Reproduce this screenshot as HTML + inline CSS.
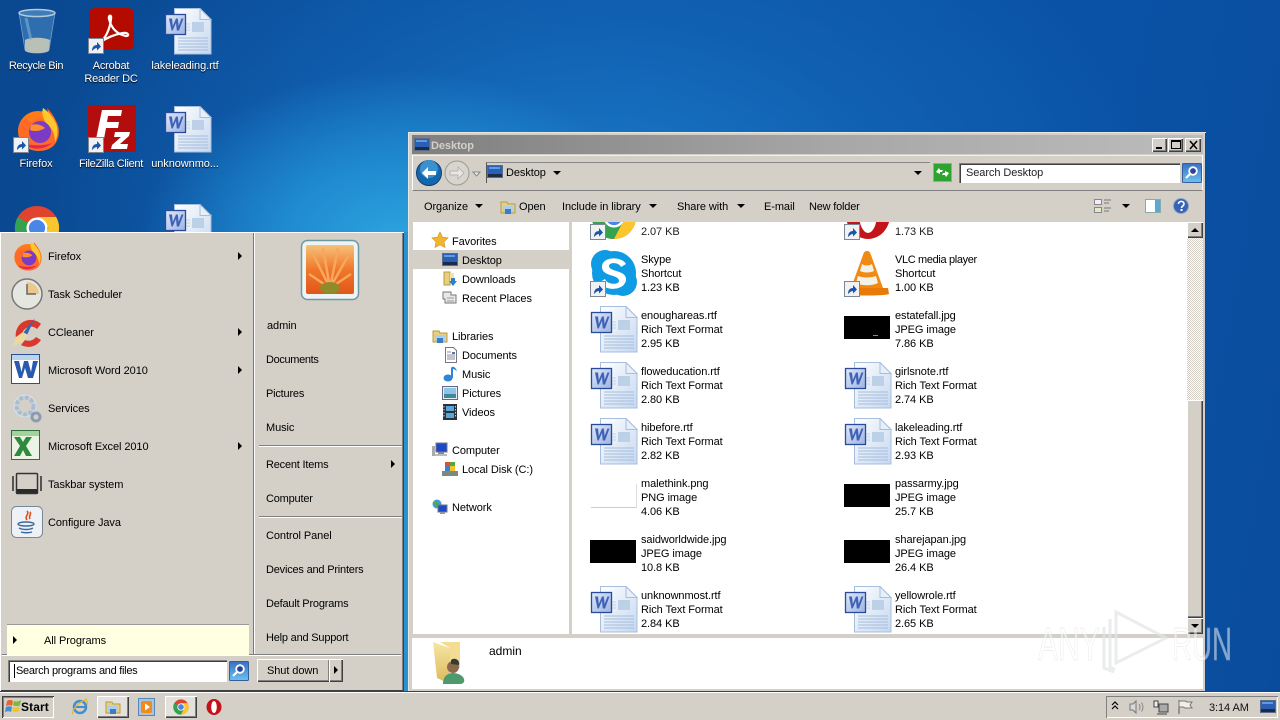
<!DOCTYPE html>
<html><head><meta charset="utf-8"><title>Desktop</title>
<style>
html,body{margin:0;padding:0;width:1280px;height:720px;overflow:hidden}
body{position:relative;font:11px/14px "Liberation Sans",sans-serif;color:#000;background:#0b55a8;letter-spacing:-.08px}
#bg{position:absolute;inset:0;background:
radial-gradient(ellipse 260px 170px at 400px 240px,#2ca4de 0,#1f8ad0 45%,rgba(25,120,200,0) 100%),
radial-gradient(ellipse 560px 330px at 600px 200px,#1b78c6 0,rgba(20,105,185,.55) 55%,rgba(15,90,170,0) 100%),
linear-gradient(100deg,#0a4890 0,#0c56aa 45%,#0a52a6 80%,#0a4c9c 100%)}
.t,.w{position:absolute;white-space:nowrap}
.t{margin-top:1px}
.w{color:#fff;text-align:center;line-height:13px;text-shadow:0 1px 1px #000;width:76px;margin-top:1px}
svg.i,svg.a{position:absolute;overflow:visible}
.abs{position:absolute;box-sizing:border-box}
.raised{background:#d4d0c8;box-shadow:inset 1px 1px 0 #fff,inset -1px -1px 0 #404040,inset -2px -2px 0 #808080}
.sunk{background:#fff;box-shadow:inset 1px 1px 0 #808080,inset 2px 2px 0 #404040,inset -1px -1px 0 #fff}
.ar{position:absolute;width:0;height:0;border-left:4px solid transparent;border-right:4px solid transparent;border-top:4px solid #000}
.rr{position:absolute;width:0;height:0;border-top:4px solid transparent;border-bottom:4px solid transparent;border-left:4px solid #000}
</style></head><body>
<svg width="0" height="0" style="position:absolute">
<defs>
<linearGradient id="pg" x1="0" y1="0" x2="1" y2="1"><stop offset="0" stop-color="#fff"/><stop offset="1" stop-color="#c5d8f0"/></linearGradient>
<linearGradient id="wb" x1="0" y1="0" x2="1" y2="1"><stop offset="0" stop-color="#dfe7f7"/><stop offset="1" stop-color="#9db4e2"/></linearGradient>
<linearGradient id="fld" x1="0" y1="0" x2="0" y2="1"><stop offset="0" stop-color="#f6e6a4"/><stop offset="1" stop-color="#dcb95c"/></linearGradient>
<linearGradient id="sb" x1="0" y1="0" x2="0" y2="1"><stop offset="0" stop-color="#3a6fc4"/><stop offset="1" stop-color="#6dc0ef"/></linearGradient>
<symbol id="doc" viewBox="0 0 48 48">
<path d="M10.500 .5H36L47 11.500V46H10.500Z" fill="url(#pg)" stroke="#a8bedd"/>
<path d="M36 .5V11.500H47Z" fill="#e8eff9" stroke="#a8bedd"/>
<path d="M14 30H44M14 33H44M14 36H44M14 39H44M14 42H44" stroke="#a6bcdc"/>
<rect x="28" y="14" width="12" height="10" fill="#bcd0e8"/>
<path d="M22 16h4M22 19h4M22 22h4" stroke="#c4d4ea"/>
<rect x="1.500" y="6.500" width="20" height="20" fill="url(#wb)" stroke="#2a4a9c" stroke-width="1.300"/>
<path d="M5 10.500h3l.8 7.500 3.200-7.500h1.800l.8 7.500 2.900-7.500h2l-4.500 12h-2.200l-.8-7.500-3.300 7.500H7.500z" fill="#3f62b8"/>
</symbol>
<symbol id="sc" viewBox="0 0 16 16">
<rect x=".5" y=".5" width="15" height="15" fill="#f0f1f3" stroke="#7d8794"/>
<path d="M4 13c0-4 2-6 5-6V4l4 4.500-4 4V10c-2 0-3 1-5 3z" fill="#1b54a8"/>
</symbol>
<symbol id="ff" viewBox="0 0 48 48">
<circle cx="25" cy="26" r="20" fill="#ff7a1a"/>
<path d="M7 17c-3 9-1 19 7 25 9 6 22 5 28-3 5-7 5-16 1-23-2-5-6-10-9-13 2 6 1 9-2 11-6-2-11 0-13 3-4-1-5-2-6-5-1 2-3 4-6 5z" fill="#ff6a26"/>
<path d="M30 3c6 4 12 11 14 19 1 6 0 11-2 15 0-8-3-14-8-18-3-3-6-10-4-16z" fill="#ffc72e"/>
<circle cx="27" cy="27" r="11" fill="#7a3bc6"/>
<path d="M17 25c4 2 11 1 15-2-3-3-9-5-14-3z" fill="#ff8f2a"/>
<path d="M10 38c7 7 20 8 29 0-7 3-21 3-29 0z" fill="#e3245e"/>
</symbol>
<symbol id="ch" viewBox="0 0 48 48">
<circle cx="24" cy="24" r="23" fill="#e0432e"/>
<path d="M24 24L4 35.500A23 23 0 0 1 4 12.500Z" fill="#35a24f"/>
<path d="M4 35.500A23 23 0 0 0 24 47L36 24H24Z" fill="#35a24f"/>
<path d="M24 47A23 23 0 0 0 44 12.500H24L36 24Z" fill="#fbc62c"/>
<circle cx="24" cy="24" r="11" fill="#fff"/><circle cx="24" cy="24" r="8.500" fill="#4a86e8"/>
</symbol>
<symbol id="mon" viewBox="0 0 16 16">
<rect x=".5" y="1.500" width="15" height="12" fill="#2b5fb5" stroke="#5a6c88"/>
<rect x="1" y="10" width="14" height="3" fill="#1b2b4a"/><path d="M2 3h11v2H2z" fill="#5f9be0"/>
</symbol>
<symbol id="fold" viewBox="0 0 16 16">
<path d="M1 3h6l1 2h7v9H1z" fill="#e8cf7c" stroke="#b79a46"/><path d="M3 7h10v6H3z" fill="#a8d0ee"/><path d="M5 15v-5h6v5" fill="#3c7cc4"/>
</symbol>
<symbol id="search" viewBox="0 0 20 20">
<rect x=".5" y=".5" width="19" height="19" rx="1" fill="url(#sb)" stroke="#355e9f"/>
<circle cx="11" cy="8" r="3.800" fill="#26449a" stroke="#fff" stroke-width="1.800"/>
<path d="M8 11l-4 4" stroke="#fff" stroke-width="2.200"/>
</symbol>
</defs></svg>
<div id="bg"></div>

<!-- desktop icons -->
<svg class="i" style="left:18px;top:8px" width="38" height="46" viewBox="0 0 38 46">
<path d="M1 5L7 42c1 4 23 4 24 0L37 5z" fill="#2f6eae" stroke="#7fa8cc" stroke-width=".7"/>
<path d="M7 32c5-3 19-3 25 0l-1 10c-2 4-22 4-24 0z" fill="#b9c0b8"/>
<ellipse cx="19" cy="5" rx="18" ry="3.500" fill="#3f7db8" stroke="#b4cbdd" stroke-width="1.500"/>
<path d="M8 10l5 22" stroke="#7fb4dc" stroke-width="3" opacity=".55"/></svg>
<div class="w" style="left:-2px;top:59px;letter-spacing:-.35px">Recycle Bin</div>

<svg class="i" style="left:89px;top:8px" width="46" height="44" viewBox="0 0 46 44">
<rect width="45" height="42" rx="6" fill="#b30b00"/>
<path d="M10 35c6-3 11-14 12-24 1-5-3-4-2 0 2 8 7 15 17 17 4 0 2-4-3-3-7 1-15 4-24 10z" fill="none" stroke="#fff" stroke-width="2.200"/></svg>
<svg class="a" style="left:88px;top:38px" width="16" height="16"><use href="#sc"/></svg>
<div class="w" style="left:73px;top:59px;letter-spacing:-.2px">Acrobat<br>Reader DC</div>

<svg class="i" style="left:164px;top:8px" width="48" height="48"><use href="#doc"/></svg>
<div class="w" style="left:147px;top:59px">lakeleading.rtf</div>

<svg class="i" style="left:13px;top:105px" width="48" height="48"><use href="#ff"/></svg>
<svg class="a" style="left:13px;top:137px" width="16" height="16"><use href="#sc"/></svg>
<div class="w" style="left:-2px;top:157px">Firefox</div>

<svg class="i" style="left:88px;top:105px" width="48" height="48" viewBox="0 0 48 48">
<rect width="48" height="47" fill="#b30d0d"/>
<path d="M14 5h20l-1 6H20l-1 6h12l-1 6H18l-3 16H7zM27 27h15l-1 4-9 8h8l-1 5H23l1-4 9-8h-7z" fill="#fff"/></svg>
<svg class="a" style="left:88px;top:137px" width="16" height="16"><use href="#sc"/></svg>
<div class="w" style="left:73px;top:157px;letter-spacing:-.32px">FileZilla Client</div>

<svg class="i" style="left:164px;top:106px" width="48" height="48"><use href="#doc"/></svg>
<div class="w" style="left:147px;top:157px">unknownmo...</div>

<svg class="i" style="left:14px;top:205px" width="46" height="46"><use href="#ch"/></svg>
<svg class="i" style="left:164px;top:204px" width="48" height="48"><use href="#doc"/></svg>

<!-- explorer window -->
<div class="abs" style="left:404px;top:232px;width:4px;height:459px;background:#2a92cf"></div>
<div class="abs" style="left:408px;top:132px;width:798px;height:560px;background:#d4d0c8;box-shadow:inset 1px 1px 0 #e8e6e0,inset -1px -1px 0 #404040,inset -2px -2px 0 #d4d0c8"></div>
<div class="abs" style="left:412px;top:135px;width:791px;height:19px;background:linear-gradient(90deg,#7f7f7f,#a8a8a8 55%,#bcbcbc)"></div>
<svg class="i" style="left:414px;top:137px" width="16" height="16"><use href="#mon"/></svg>
<div class="t" style="left:431px;top:138px;font-weight:bold;color:#d4d0c8">Desktop</div>
<div class="abs raised" style="left:1152px;top:138px;width:15px;height:14px"></div>
<div class="abs" style="left:1156px;top:147px;width:6px;height:2px;background:#000"></div>
<div class="abs raised" style="left:1168px;top:138px;width:15px;height:14px"></div>
<div class="abs" style="left:1171px;top:140px;width:10px;height:9px;border:1px solid #000;border-top-width:2px"></div>
<div class="abs raised" style="left:1185px;top:138px;width:16px;height:14px"></div>
<svg class="i" style="left:1189px;top:141px" width="9" height="8"><path d="M1 0l7 8M8 0L1 8" stroke="#000" stroke-width="1.500"/></svg>

<!-- nav bar -->
<div class="abs" style="left:412px;top:155px;width:791px;height:36px;border:1px solid #fff;border-top-color:#efeee9;border-bottom-color:#808080;background:#d4d0c8"></div>
<svg class="i" style="left:416px;top:160px" width="70" height="28" viewBox="0 0 70 28">
<circle cx="13" cy="13" r="12.500" fill="#1567ac" stroke="#0c3f72"/><circle cx="13" cy="9" r="9" fill="#3b90cf"/>
<path d="M6 13l6-6v4h8v4h-8v4z" fill="#fff"/>
<circle cx="41" cy="13" r="12" fill="#d8d5cf" stroke="#9a9a95"/>
<path d="M48 13l-6-6v4h-8v4h8v4z" fill="#e8e6e2" stroke="#a8a8a4" stroke-width=".7"/>
<path d="M57 12h7l-3.500 4z" fill="#eee" stroke="#888"/></svg>
<div class="abs" style="left:486px;top:162px;width:444px;height:21px;border-left:1px solid #555;border-top:1px solid #888"></div>
<svg class="i" style="left:487px;top:164px" width="16" height="16"><use href="#mon"/></svg>
<div class="t" style="left:506px;top:165px">Desktop</div>
<div class="ar" style="left:553px;top:171px"></div>
<div class="ar" style="left:914px;top:171px"></div>
<svg class="i" style="left:933px;top:163px" width="19" height="19" viewBox="0 0 19 19">
<rect x=".5" y=".5" width="18" height="18" fill="#2fa32f" stroke="#7cbc7c"/>
<path d="M3 9l3-4 1 2 3 0-1 2H7l0 2zM16 10l-3 4-1-2-3 0 1-2h2l0-2z" fill="#fff"/></svg>
<div class="abs sunk" style="left:959px;top:163px;width:221px;height:20px"></div>
<div class="t" style="left:966px;top:165px;color:#222">Search Desktop</div>
<svg class="i" style="left:1182px;top:163px" width="20" height="20"><use href="#search"/></svg>

<!-- toolbar -->
<div class="t" style="left:424px;top:199px">Organize</div><div class="ar" style="left:475px;top:204px"></div>
<svg class="i" style="left:500px;top:199px" width="16" height="16"><use href="#fold"/></svg>
<div class="t" style="left:519px;top:199px">Open</div>
<div class="t" style="left:562px;top:199px">Include in library</div><div class="ar" style="left:649px;top:204px"></div>
<div class="t" style="left:677px;top:199px">Share with</div><div class="ar" style="left:737px;top:204px"></div>
<div class="t" style="left:764px;top:199px">E-mail</div>
<div class="t" style="left:809px;top:199px;letter-spacing:-.2px">New folder</div>
<svg class="i" style="left:1094px;top:198px" width="18" height="16" viewBox="0 0 18 16">
<rect x=".5" y="1.500" width="7" height="5" fill="#eef" stroke="#888"/><rect x=".5" y="9.500" width="7" height="5" fill="#dfe8c8" stroke="#888"/>
<path d="M10 2h7M10 5h5M10 10h7M10 13h5" stroke="#777"/></svg>
<div class="ar" style="left:1122px;top:204px"></div>
<svg class="i" style="left:1145px;top:199px" width="16" height="14" viewBox="0 0 16 14">
<rect x=".5" y=".5" width="15" height="13" fill="#fff" stroke="#8aa"/><rect x="10" y="1" width="5" height="12" fill="#5aa9d0"/></svg>
<svg class="i" style="left:1173px;top:198px" width="16" height="16" viewBox="0 0 16 16">
<circle cx="8" cy="8" r="7.500" fill="#3a63b4" stroke="#8fa3cc"/>
<path d="M5.500 6c0-3.500 5.500-3.500 5.500 0 0 2-2.500 2-2.500 4" fill="none" stroke="#fff" stroke-width="1.600"/><rect x="7.500" y="11" width="2" height="2" fill="#fff"/></svg>

<!-- panes -->
<div class="abs" style="left:413px;top:222px;width:156px;height:412px;background:#fff"></div>
<div class="abs" style="left:572px;top:222px;width:615px;height:412px;background:#fff;overflow:hidden" id="list">
<svg class="i" style="left:19px;top:-28px" width="46" height="46"><use href="#ch"/></svg>
<svg class="i" style="left:273px;top:-30px" width="46" height="46" viewBox="0 0 46 46"><ellipse cx="23" cy="23" rx="22" ry="24" fill="#c3141c"/><ellipse cx="23" cy="22" rx="9" ry="19" fill="#fff"/></svg>
<svg class="i" style="left:19px;top:28px" width="46" height="46" viewBox="0 0 46 46">
<circle cx="14" cy="14" r="14" fill="#0f9be4"/><circle cx="32" cy="32" r="14" fill="#0f9be4"/><circle cx="23" cy="23" r="22" fill="#0f9be4"/>
<path d="M35 29c0-9-17-7-17-13 0-4 10-4 12 1l5-3c-4-8-24-8-24 3 0 10 17 7 17 14 0 4-12 4-14-2l-5 3c4 10 26 9 26-3z" fill="#fff"/></svg>
<svg class="i" style="left:272px;top:28px" width="46" height="46" viewBox="0 0 46 46">
<path d="M23 1c-2 0-3 1-4 4L7 38h32L27 5c-1-3-2-4-4-4z" fill="#f08a12"/>
<path d="M18 14c3 2 7 2 10 0l2 7c-4 2-10 2-14 0zM14 26c5 2 13 2 18 0l2 7c-6 3-16 3-22 0z" fill="#f4f1ea"/>
<path d="M2 38h42l1 6c-3 2-41 2-44 0z" fill="#e87a08"/></svg>
</div>
<svg class="a" style="left:590px;top:224px" width="16" height="16"><use href="#sc"/></svg>
<svg class="a" style="left:844px;top:224px" width="16" height="16"><use href="#sc"/></svg>
<svg class="a" style="left:590px;top:281px" width="16" height="16"><use href="#sc"/></svg>
<svg class="a" style="left:844px;top:281px" width="16" height="16"><use href="#sc"/></svg>

<div class="t" style="left:641px;top:224px;color:#222">2.07 KB</div>
<div class="t" style="left:895px;top:224px;color:#222">1.73 KB</div>
<div class="t" style="left:641px;top:252px">Skype<br>Shortcut<br>1.23 KB</div>
<div class="t" style="left:895px;top:252px"><span style="letter-spacing:-.35px">VLC media player</span><br>Shortcut<br>1.00 KB</div>
<div class="t" style="left:641px;top:308px">enoughareas.rtf<br>Rich Text Format<br>2.95 KB</div>
<div class="t" style="left:895px;top:308px">estatefall.jpg<br>JPEG image<br>7.86 KB</div>
<div class="t" style="left:641px;top:364px">floweducation.rtf<br>Rich Text Format<br>2.80 KB</div>
<div class="t" style="left:895px;top:364px">girlsnote.rtf<br>Rich Text Format<br>2.74 KB</div>
<div class="t" style="left:641px;top:420px">hibefore.rtf<br>Rich Text Format<br>2.82 KB</div>
<div class="t" style="left:895px;top:420px">lakeleading.rtf<br>Rich Text Format<br>2.93 KB</div>
<div class="t" style="left:641px;top:476px">malethink.png<br>PNG image<br>4.06 KB</div>
<div class="t" style="left:895px;top:476px">passarmy.jpg<br>JPEG image<br>25.7 KB</div>
<div class="t" style="left:641px;top:532px">saidworldwide.jpg<br>JPEG image<br>10.8 KB</div>
<div class="t" style="left:895px;top:532px">sharejapan.jpg<br>JPEG image<br>26.4 KB</div>
<div class="t" style="left:641px;top:588px">unknownmost.rtf<br>Rich Text Format<br>2.84 KB</div>
<div class="t" style="left:895px;top:588px">yellowrole.rtf<br>Rich Text Format<br>2.65 KB</div>

<svg class="i" style="left:590px;top:306px" width="48" height="48"><use href="#doc"/></svg>
<svg class="i" style="left:590px;top:362px" width="48" height="48"><use href="#doc"/></svg>
<svg class="i" style="left:590px;top:418px" width="48" height="48"><use href="#doc"/></svg>
<svg class="i" style="left:844px;top:362px" width="48" height="48"><use href="#doc"/></svg>
<svg class="i" style="left:844px;top:418px" width="48" height="48"><use href="#doc"/></svg>
<svg class="i" style="left:590px;top:586px" width="48" height="48"><use href="#doc"/></svg>
<svg class="i" style="left:844px;top:586px" width="48" height="48"><use href="#doc"/></svg>
<div class="abs" style="left:844px;top:316px;width:46px;height:23px;background:#000"></div>
<div class="abs" style="left:873px;top:335px;width:5px;height:1px;background:#888"></div>
<div class="abs" style="left:844px;top:484px;width:46px;height:23px;background:#000"></div>
<div class="abs" style="left:590px;top:540px;width:46px;height:23px;background:#000"></div>
<div class="abs" style="left:844px;top:540px;width:46px;height:23px;background:#000"></div>
<div class="abs" style="left:591px;top:484px;width:46px;height:24px;border-right:1px solid #ddd;border-bottom:1px solid #ccc"></div>

<!-- scrollbar -->
<div class="abs" style="left:1187px;top:222px;width:16px;height:412px;background:repeating-conic-gradient(#d4d0c8 0 25%,#fff 0 50%) 0 0/2px 2px"></div>
<div class="abs raised" style="left:1187px;top:222px;width:16px;height:16px"></div>
<div class="abs" style="left:1191px;top:228px;border-left:4px solid transparent;border-right:4px solid transparent;border-bottom:4px solid #000"></div>
<div class="abs raised" style="left:1187px;top:400px;width:16px;height:218px"></div>
<div class="abs raised" style="left:1187px;top:618px;width:16px;height:16px"></div>
<div class="ar" style="left:1191px;top:624px"></div>

<!-- tree -->
<div class="abs" style="left:413px;top:250px;width:156px;height:19px;background:#d4d0c8"></div>
<svg class="i" style="left:432px;top:232px" width="16" height="16" viewBox="0 0 16 16"><path d="M8 0l2.500 5.200 5.500.7-4 3.900 1 5.700L8 12.800 3 15.500l1-5.700-4-3.900 5.500-.7z" fill="#f3b52d" stroke="#d48a20" stroke-width=".6"/></svg>
<div class="t" style="left:452px;top:234px">Favorites</div>
<svg class="i" style="left:442px;top:252px" width="16" height="16"><use href="#mon"/></svg>
<div class="t" style="left:462px;top:253px">Desktop</div>
<svg class="i" style="left:442px;top:271px" width="16" height="16" viewBox="0 0 16 16"><path d="M2 1h6v13H2z" fill="#e8cf7c" stroke="#b79a46"/><path d="M8 2h4v8H8z" fill="#f2e3a8"/><path d="M9 7h4v3h2l-4 5-4-5h2z" fill="#2f7fd0"/></svg>
<div class="t" style="left:462px;top:272px">Downloads</div>
<svg class="i" style="left:442px;top:290px" width="16" height="16" viewBox="0 0 16 16"><path d="M1 2h8v3h5v8H3V9H1z" fill="#e8e8e8" stroke="#777"/><path d="M5 8h7M5 11h7" stroke="#999"/></svg>
<div class="t" style="left:462px;top:291px">Recent Places</div>
<svg class="i" style="left:432px;top:328px" width="16" height="16"><use href="#fold"/></svg>
<div class="t" style="left:452px;top:329px">Libraries</div>
<svg class="i" style="left:444px;top:347px" width="14" height="16" viewBox="0 0 14 16"><path d="M1.500.5h8l3 3v12h-11z" fill="#fff" stroke="#778"/><path d="M3 5h4M3 8h8M3 10h8M3 12h8" stroke="#889"/><rect x="8" y="5" width="3" height="2" fill="#57a"/></svg>
<div class="t" style="left:462px;top:348px">Documents</div>
<svg class="i" style="left:443px;top:365px" width="15" height="17" viewBox="0 0 15 17"><ellipse cx="5" cy="13" rx="4.500" ry="3.500" fill="#2f86d8"/><path d="M8 13V3c2-3 5 0 6 3-2-1-3-2-4-2v9z" fill="#2f86d8"/></svg>
<div class="t" style="left:462px;top:367px">Music</div>
<svg class="i" style="left:442px;top:386px" width="16" height="14" viewBox="0 0 16 14"><rect x=".5" y=".5" width="15" height="13" fill="#e8eef2" stroke="#668"/><path d="M2 2h12v6H2z" fill="#8fc4e6"/><path d="M2 8h12v4H2z" fill="#3f8a9a"/></svg>
<div class="t" style="left:462px;top:386px">Pictures</div>
<svg class="i" style="left:443px;top:404px" width="14" height="16" viewBox="0 0 14 16"><rect width="14" height="16" fill="#2b3138"/><rect x="3" y="2" width="8" height="5" fill="#57a7dc"/><rect x="3" y="9" width="8" height="5" fill="#57a7dc"/><path d="M1 2v12" stroke="#ccc" stroke-dasharray="1.500 1.500"/><path d="M12.500 2v12" stroke="#ccc" stroke-dasharray="1.500 1.500"/></svg>
<div class="t" style="left:462px;top:405px">Videos</div>
<svg class="i" style="left:432px;top:442px" width="16" height="16" viewBox="0 0 16 16"><rect x="0" y="4" width="3" height="10" fill="#aaa"/><rect x="4" y="1" width="11" height="9" fill="#1b49c8" stroke="#778"/><rect x="6" y="10" width="6" height="2" fill="#889"/><rect x="3" y="12" width="12" height="2" fill="#bbb"/></svg>
<div class="t" style="left:452px;top:443px">Computer</div>
<svg class="i" style="left:442px;top:461px" width="16" height="16" viewBox="0 0 16 16"><rect x="0" y="10" width="16" height="5" fill="#7a8a80"/><rect x="3" y="1" width="5" height="4" fill="#e84c2a"/><rect x="8" y="1" width="5" height="4" fill="#52a83a"/><rect x="3" y="5" width="5" height="5" fill="#3f7fd0"/><rect x="8" y="5" width="5" height="5" fill="#f3c32a"/></svg>
<div class="t" style="left:462px;top:462px">Local Disk (C:)</div>
<svg class="i" style="left:432px;top:499px" width="16" height="16" viewBox="0 0 16 16"><circle cx="5" cy="5" r="4.500" fill="#3c9fd8"/><path d="M2 3h4l1 3-3 2z" fill="#57a83c"/><rect x="6" y="6" width="9" height="7" fill="#1b49c8" stroke="#778"/><rect x="8" y="13" width="5" height="2" fill="#999"/></svg>
<div class="t" style="left:452px;top:500px">Network</div>

<!-- details pane -->
<div class="abs" style="left:412px;top:638px;width:791px;height:51px;background:#fff"></div>
<svg class="i" style="left:432px;top:640px" width="40" height="46" viewBox="0 0 40 46">
<path d="M1 2l17 6v36L5 38z" fill="url(#fld)"/><path d="M8 2h20v26H18V8z" fill="#f3dc94"/>
<circle cx="21" cy="27" r="6" fill="#8a6a4a"/><path d="M19 20c4-3 9 0 8 5l-8-1z" fill="#3a3a30"/>
<path d="M11 44c0-9 6-11 10-11s10 2 11 6c1 3-1 5-4 5z" fill="#4f9a6c"/></svg>
<div class="t" style="left:489px;top:644px;font-size:12px;margin-top:0;letter-spacing:0">admin</div>

<!-- watermark -->
<svg class="i" style="left:1030px;top:605px" width="210" height="70" viewBox="0 0 210 70">
<g opacity=".5" fill="#fff" stroke="#d4d7da" stroke-width=".7" style="letter-spacing:0">
<text x="8" y="55" font-family="Liberation Sans" font-size="46" textLength="62" lengthAdjust="spacingAndGlyphs">ANY</text>
<text x="142" y="55" font-family="Liberation Sans" font-size="46" textLength="60" lengthAdjust="spacingAndGlyphs">RUN</text>
</g>
<g fill="none" stroke="#e2e4e6" stroke-width="3" opacity=".7"><path d="M86 7V58L136 33Z"/><path d="M80 14V62l5 3"/><path d="M74 22V63l10 4"/></g>
</svg>

<!-- start menu -->
<div class="abs" style="left:0;top:232px;width:404px;height:459px;background:#d4d0c8;box-shadow:inset 1px 1px 0 #fff,inset -1px -1px 0 #404040,inset -2px 0 0 #808080"></div>
<div class="abs" style="left:253px;top:233px;width:2px;height:421px;background:linear-gradient(90deg,#777 50%,#fff 50%)"></div>
<div class="abs" style="left:2px;top:654px;width:399px;height:2px;background:linear-gradient(#808080 50%,#fff 50%)"></div>

<svg class="i" style="left:11px;top:240px" width="32" height="32"><use href="#ff"/></svg>
<div class="t" style="left:48px;top:249px">Firefox</div><div class="rr" style="left:238px;top:252px"></div>
<svg class="i" style="left:11px;top:278px" width="32" height="32" viewBox="0 0 32 32"><circle cx="16" cy="16" r="15" fill="#e6e6e0" stroke="#777" stroke-width="1.500"/><path d="M16 4a12 12 0 0 1 12 12H16z" fill="#ecc88a"/><path d="M16 6v10h9" fill="none" stroke="#666" stroke-width="1.500"/></svg>
<div class="t" style="left:48px;top:287px">Task Scheduler</div>
<svg class="i" style="left:11px;top:316px" width="32" height="32" viewBox="0 0 32 32"><path d="M30 8A15 15 0 0 0 5 22l6-3A9 9 0 0 1 26 13z" fill="#d8392c"/><path d="M30 24a15 15 0 0 1-20 5l4-5a9 9 0 0 0 11-3z" fill="#d8392c"/><path d="M24 2l-8 17-4-2z" fill="#3468b0"/><path d="M12 16l5 3-4 6-11 5 3-9z" fill="#ecd9a0"/></svg>
<div class="t" style="left:48px;top:325px">CCleaner</div><div class="rr" style="left:238px;top:328px"></div>
<svg class="i" style="left:11px;top:354px" width="30" height="30" viewBox="0 0 30 30"><rect x=".5" y=".5" width="28" height="29" fill="#fff" stroke="#2a4f92"/><rect x="1" y="1" width="27" height="5" fill="#bcd3ee"/><path d="M3 7h5l2.500 11L13 7h4l3 11L22 7h5l-5 17h-5l-3-10-3 10H8z" fill="#2a5ab0"/></svg>
<div class="t" style="left:48px;top:363px">Microsoft Word 2010</div><div class="rr" style="left:238px;top:366px"></div>
<svg class="i" style="left:11px;top:392px" width="32" height="32" viewBox="0 0 32 32"><circle cx="14" cy="14" r="9" fill="none" stroke="#a6bdd8" stroke-width="5" stroke-dasharray="4 2"/><circle cx="14" cy="14" r="11" fill="none" stroke="#d8e2ee" stroke-width="1"/><circle cx="25" cy="25" r="4" fill="none" stroke="#8a9cb0" stroke-width="3"/></svg>
<div class="t" style="left:48px;top:401px">Services</div>
<svg class="i" style="left:11px;top:430px" width="30" height="30" viewBox="0 0 30 30"><rect x=".5" y=".5" width="28" height="29" fill="#eaf3e4" stroke="#2f6d3a"/><rect x="1" y="1" width="27" height="5" fill="#9fd49a"/><path d="M3 7h6l3 5 3-5h6l-6 9 6 10h-6l-3-6-3 6H3l6-10z" fill="#2f8a3e"/></svg>
<div class="t" style="left:48px;top:439px">Microsoft Excel 2010</div><div class="rr" style="left:238px;top:442px"></div>
<svg class="i" style="left:12px;top:472px" width="30" height="24" viewBox="0 0 30 24"><rect x="4.500" y="1.500" width="21" height="20" rx="1" fill="#d4d0c8" stroke="#333" stroke-width="1.500"/><rect x="5" y="17" width="20" height="4" fill="#2a2a2a"/><path d="M1 4v15M29 4v15" stroke="#555" stroke-width="2"/></svg>
<div class="t" style="left:48px;top:477px">Taskbar system</div>
<svg class="i" style="left:11px;top:506px" width="32" height="32" viewBox="0 0 32 32"><rect x=".5" y=".5" width="31" height="31" rx="5" fill="#eef2f6" stroke="#7a8896"/><path d="M16 5c3 3-3 5 0 9M19 6c2 2-2 4 0 7" fill="none" stroke="#d8501c" stroke-width="1.600"/><ellipse cx="15" cy="18" rx="8" ry="2" fill="none" stroke="#3a6a9c" stroke-width="1.400"/><path d="M8 22c4 2 10 2 14 0M10 26c3 1 8 1 11 0" fill="none" stroke="#3a6a9c" stroke-width="1.400"/></svg>
<div class="t" style="left:48px;top:515px">Configure Java</div>

<div class="abs" style="left:7px;top:624px;width:242px;height:31px;background:#ffffe1;border-top:1px solid #999"></div>
<div class="rr" style="left:13px;top:636px"></div>
<div class="t" style="left:44px;top:633px">All Programs</div>

<div class="abs sunk" style="left:8px;top:660px;width:219px;height:22px"></div>
<div class="t" style="left:16px;top:663px;letter-spacing:-.28px">Search programs and files</div>
<div class="abs" style="left:14px;top:664px;width:1px;height:14px;background:#000"></div>
<svg class="i" style="left:229px;top:661px" width="20" height="20"><use href="#search"/></svg>
<div class="abs raised" style="left:257px;top:659px;width:73px;height:23px"></div>
<div class="t" style="left:267px;top:663px">Shut down</div>
<div class="abs raised" style="left:329px;top:659px;width:14px;height:23px"></div>
<div class="rr" style="left:334px;top:666px"></div>

<svg class="i" style="left:301px;top:240px" width="58" height="60" viewBox="0 0 58 60">
<defs><linearGradient id="sky" x1="0" y1="0" x2="0" y2="1"><stop offset="0" stop-color="#f5c27a"/><stop offset=".5" stop-color="#f0782a"/><stop offset="1" stop-color="#e0561a"/></linearGradient></defs>
<rect x=".5" y=".5" width="57" height="59" rx="6" fill="#eef4f4" stroke="#6f98a2" stroke-width="1.500"/>
<rect x="5" y="5" width="48" height="49" rx="2" fill="url(#sky)"/>
<path d="M29 48L12 14M29 48L22 8M29 48L37 8M29 48L47 16M29 48L8 34M29 48L50 34" stroke="#f9a65e" stroke-width="2.500"/>
<ellipse cx="29" cy="48" rx="10" ry="6" fill="#8f8a2a"/></svg>

<div class="t" style="left:267px;top:318px">admin</div>
<div class="t" style="left:266px;top:352px;letter-spacing:-.35px">Documents</div>
<div class="t" style="left:266px;top:386px;letter-spacing:-.2px">Pictures</div>
<div class="t" style="left:266px;top:420px">Music</div>
<div class="abs" style="left:259px;top:445px;width:143px;height:2px;background:linear-gradient(#808080 50%,#fff 50%)"></div>
<div class="t" style="left:266px;top:457px;letter-spacing:-.2px">Recent Items</div><div class="rr" style="left:391px;top:460px"></div>
<div class="t" style="left:266px;top:491px;letter-spacing:-.2px">Computer</div>
<div class="abs" style="left:259px;top:516px;width:143px;height:2px;background:linear-gradient(#808080 50%,#fff 50%)"></div>
<div class="t" style="left:266px;top:528px">Control Panel</div>
<div class="t" style="left:266px;top:562px;letter-spacing:-.2px">Devices and Printers</div>
<div class="t" style="left:266px;top:596px;letter-spacing:-.2px">Default Programs</div>
<div class="t" style="left:266px;top:630px;letter-spacing:-.2px">Help and Support</div>

<!-- taskbar -->
<div class="abs" style="left:0;top:691px;width:1280px;height:29px;background:#d4d0c8;border-top:1px solid #404040;box-shadow:inset 0 1px 0 #fff"></div>
<div class="abs" style="left:2px;top:696px;width:52px;height:22px;background:#d4d0c8;box-shadow:inset 1px 1px 0 #404040,inset -1px -1px 0 #fff,inset 2px 2px 0 #808080"></div>
<svg class="i" style="left:6px;top:698px" width="16" height="16" viewBox="0 0 16 16"><path d="M1 3c3-2 4-1 6 0L6 8C4 7 3 7 0 8z" fill="#e8642a"/><path d="M8 3c2 1 4 1 7-1l-1 5c-3 2-5 1-7 0z" fill="#7ab83c"/><path d="M0 9c3-1 4-1 6 0l-1 5c-2-1-3-1-6 0z" fill="#3f8fd8"/><path d="M7 9c2 1 4 1 7-1l-1 5c-3 2-5 1-7 0z" fill="#f3c32a"/></svg>
<div class="t" style="left:21px;top:700px;font-size:12px;font-weight:bold;margin-top:0;letter-spacing:.1px">Start</div>
<svg class="i" style="left:71px;top:698px" width="18" height="18" viewBox="0 0 18 18"><circle cx="9" cy="9" r="6" fill="none" stroke="#3f8fd0" stroke-width="2.500"/><path d="M3 9h12" stroke="#3f8fd0" stroke-width="2"/><path d="M2 16c-2-3 5-12 14-15-3 1 2 2 0 6" fill="none" stroke="#e8b62a" stroke-width="1.200"/></svg>
<div class="abs" style="left:97px;top:696px;width:32px;height:22px;background:#e3e1dc;box-shadow:inset 1px 1px 0 #fff,inset -1px -1px 0 #404040,inset -2px -2px 0 #808080"></div>
<svg class="i" style="left:105px;top:699px" width="16" height="16"><use href="#fold"/></svg>
<svg class="i" style="left:138px;top:698px" width="17" height="18" viewBox="0 0 17 18"><rect x=".5" y=".5" width="16" height="17" fill="#a8c4e0" stroke="#5a86b4"/><rect x="3" y="3" width="11" height="12" rx="2" fill="#f08a1c"/><path d="M7 5.500l5 3.500-5 3.500z" fill="#fff"/></svg>
<div class="abs" style="left:165px;top:696px;width:32px;height:22px;background:#e3e1dc;box-shadow:inset 1px 1px 0 #fff,inset -1px -1px 0 #404040,inset -2px -2px 0 #808080"></div>
<svg class="i" style="left:173px;top:699px" width="16" height="16"><use href="#ch"/></svg>
<svg class="i" style="left:206px;top:699px" width="16" height="16" viewBox="0 0 16 16"><ellipse cx="8" cy="8" rx="7.500" ry="8" fill="#c4121a"/><ellipse cx="8" cy="8" rx="2.800" ry="6" fill="#fff"/></svg>

<div class="abs" style="left:1106px;top:696px;width:172px;height:22px;box-shadow:inset 1px 1px 0 #808080,inset -1px -1px 0 #fff"></div>
<svg class="i" style="left:1111px;top:701px" width="8" height="10"><path d="M1 4l3-3 3 3M1 8l3-3 3 3" fill="none" stroke="#000" stroke-width="1.200"/></svg>
<svg class="i" style="left:1129px;top:700px" width="16" height="14" viewBox="0 0 16 14"><path d="M1 4h3l3-3v12l-3-3H1z" fill="#d8d8d4" stroke="#777"/><path d="M10 4c1.500 2 1.500 4 0 6M12.500 2.500c2 3 2 6 0 9" fill="none" stroke="#888"/></svg>
<svg class="i" style="left:1153px;top:700px" width="16" height="15" viewBox="0 0 16 15"><path d="M1 1h4v6H1z" fill="#eee" stroke="#444"/><path d="M6 4h9v8H6z" fill="#aaa" stroke="#444"/><path d="M4 14h10" stroke="#444"/></svg>
<svg class="i" style="left:1177px;top:699px" width="16" height="16" viewBox="0 0 16 16"><path d="M2 1v14" stroke="#555"/><path d="M2 2h6l2 1h5l-2 3 2 3H8L6 8H2z" fill="#f0efe8" stroke="#777"/></svg>
<div class="t" style="left:1209px;top:700px;color:#111">3:14 AM</div>
<svg class="i" style="left:1260px;top:699px" width="16" height="16"><use href="#mon"/></svg>
</body></html>
